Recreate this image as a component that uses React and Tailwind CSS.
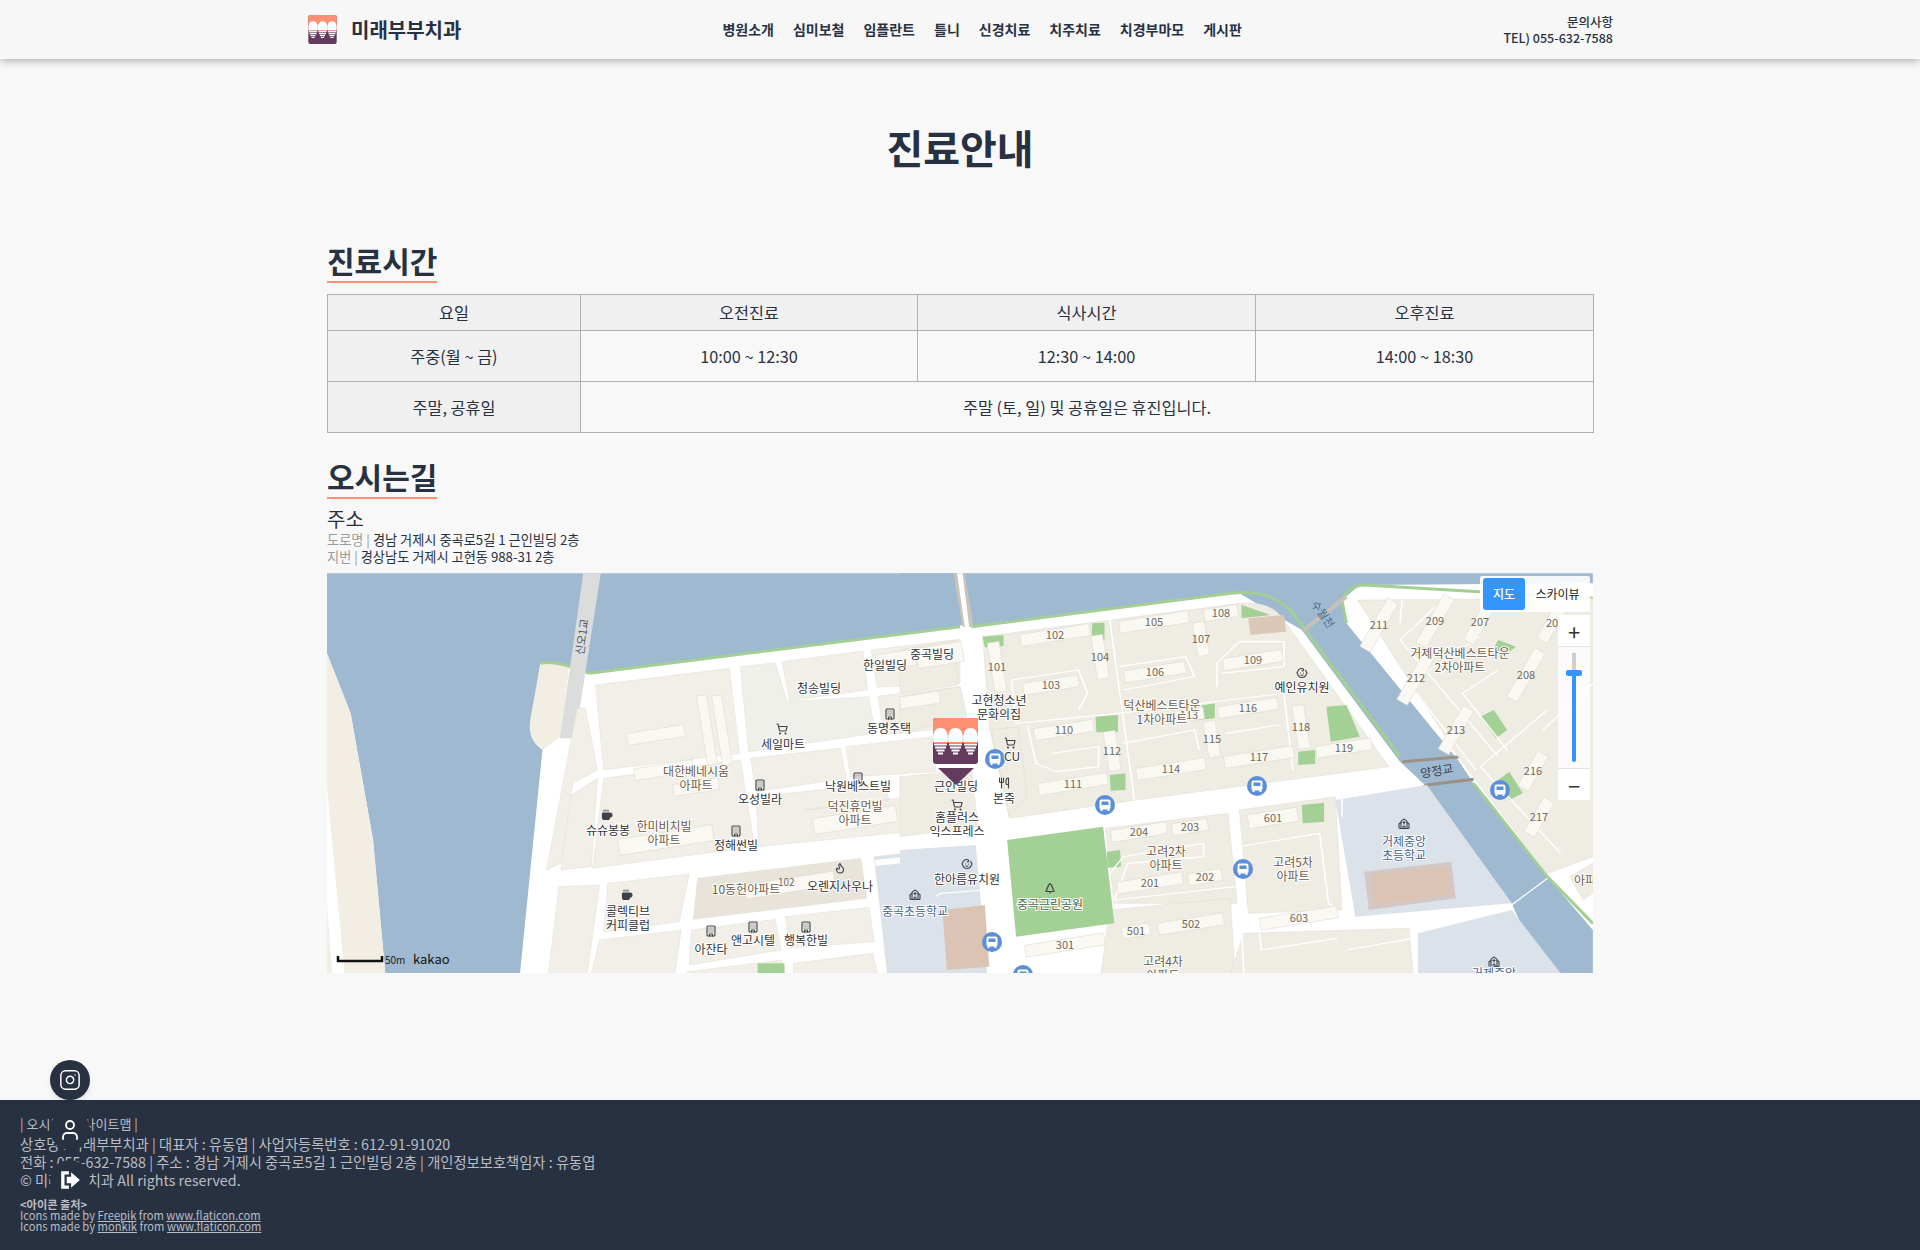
import { Instagram, User, ShoppingCart, Coffee, Building, Utensils, Flame, Baby, Church, TreePine } from 'lucide-react';

const navItems = ['병원소개', '심미보철', '임플란트', '틀니', '신경치료', '치주치료', '치경부마모', '게시판'];

function ToothMark({ className }) {
    return (
        <svg viewBox="0 0 45 46" className={className}>
            <rect width="45" height="46" rx="3" fill="#643b5f" />
            <path d="M0 3a3 3 0 0 1 3-3h39a3 3 0 0 1 3 3v22H0z" fill="#ff8f73" />
            {[7.5, 22.5, 37.5].map((x) => (
                <g key={x} fill="#fff">
                    <path d={`M${x - 7} 24c-1-6 0-14 7-14s8 8 7 14z`} />
                    <rect x={x - 6.500} y="25.500" width="13" height="2" />
                    <rect x={x - 5.500} y="28.500" width="11" height="2" />
                    <rect x={x - 4} y="31.500" width="8" height="2" />
                    <rect x={x - 2.500} y="34.500" width="5" height="2" />
                </g>
            ))}
        </svg>
    );
}

// [label, cx, cy, w, h] in page coordinates, tilted with the street grid
const buildings = [
    ['105', 1154, 622, 70, 12], ['108', 1221, 613, 34, 12], ['102', 1055, 635, 70, 12], ['107', 1201, 639, 12, 34],
    ['104', 1100, 657, 12, 44], ['101', 997, 667, 12, 50], ['103', 1051, 685, 56, 12], ['106', 1155, 672, 62, 12],
    ['109', 1253, 660, 60, 12], ['110', 1064, 730, 60, 12], ['116', 1248, 708, 60, 12], ['118', 1301, 727, 12, 44],
    ['112', 1112, 751, 12, 40], ['115', 1212, 739, 12, 36], ['119', 1344, 748, 56, 12], ['117', 1259, 757, 70, 12],
    ['114', 1171, 769, 70, 12], ['111', 1073, 784, 70, 12], ['113', 1189, 715, 30, 12],
    ['601', 1273, 818, 50, 14], ['204', 1139, 832, 56, 12], ['203', 1190, 827, 36, 12], ['202', 1205, 877, 34, 12],
    ['201', 1150, 883, 66, 12], ['603', 1299, 918, 78, 12], ['502', 1191, 924, 66, 12], ['501', 1136, 931, 28, 12],
    ['301', 1065, 945, 80, 12],
    ['', 656, 735, 58, 12], ['', 664, 770, 60, 12], ['', 707, 730, 10, 70], ['', 722, 730, 10, 70],
    ['', 696, 787, 46, 12], ['', 855, 820, 84, 16], ['', 666, 840, 95, 16], ['', 790, 885, 90, 14],
    ['', 896, 660, 40, 16], ['', 940, 655, 46, 20], ['', 920, 700, 40, 12],
];

const eastBuildings = [
    ['211', 1379, 625, 12, 56], ['209', 1435, 621, 12, 56], ['207', 1480, 622, 12, 46], ['20', 1552, 623, 12, 40],
    ['212', 1416, 678, 12, 56], ['208', 1526, 675, 12, 56], ['213', 1456, 730, 12, 50], ['216', 1533, 771, 12, 40],
    ['217', 1539, 817, 12, 40],
];

// [text lines, cx, first baseline y, colour]
const mapLabels = [
    [['중곡빌딩'], 932, 659], [['한일빌딩'], 885, 670], [['청송빌딩'], 819, 693], [['동명주택'], 889, 733],
    [['세일마트'], 783, 749], [['대한베네시움', '아파트'], 696, 776, '#6b5a48'], [['오성빌라'], 760, 804],
    [['낙원베스트빌'], 858, 791], [['덕진휴먼빌', '아파트'], 855, 811, '#6b5a48'], [['슈슈봉봉'], 608, 835],
    [['한미비치빌', '아파트'], 664, 831, '#6b5a48'], [['정해썬빌'], 736, 850], [['10동헌아파트'], 746, 894, '#6b5a48'],
    [['오렌지사우나'], 840, 891], [['콜렉티브', '커피클럽'], 628, 916], [['앤고시텔'], 753, 945],
    [['행복한빌'], 806, 945], [['아잔타'], 711, 954], [['중곡초등학교'], 915, 916, '#45618a'],
    [['고현청소년', '문화의집'], 999, 705], [['CU'], 1012, 761], [['근인빌딩'], 956, 791], [['본죽'], 1004, 803],
    [['홈플러스', '익스프레스'], 957, 822], [['덕산베스트타운', '1차아파트'], 1162, 710, '#6b5a48'],
    [['예인유치원'], 1302, 692], [['거제덕산베스트타운', '2차아파트'], 1460, 658, '#6b5a48'], [['한아름유치원'], 967, 884],
    [['중곡근린공원'], 1050, 909, '#45674a'], [['고려2차', '아파트'], 1166, 856, '#6b5a48'],
    [['고려5차', '아파트'], 1293, 867, '#6b5a48'], [['거제중앙', '초등학교'], 1404, 846, '#45618a'],
    [['고려4차', '아파트'], 1163, 966, '#6b5a48'], [['거제중앙'], 1494, 978, '#45618a'], [['아파'], 1585, 885, '#6b5a48'],
];

const mapIcons = [
    [ShoppingCart, 776, 723], [Building, 884, 708], [Building, 754, 779], [Building, 852, 772], [Coffee, 601, 809],
    [Building, 730, 825], [Flame, 834, 862], [Coffee, 621, 889], [Building, 705, 925], [Building, 747, 921],
    [Building, 800, 921], [Church, 909, 889], [ShoppingCart, 1004, 737], [Utensils, 998, 777], [ShoppingCart, 951, 799],
    [Baby, 1296, 667], [Baby, 961, 858], [TreePine, 1044, 882], [Church, 1398, 818], [Church, 1488, 956],
];

const busStops = [[995, 759], [1105, 805], [1257, 786], [1500, 790], [1243, 869], [992, 942], [1023, 975]];

function KakaoMap() {
    return (
        <svg viewBox="327 573 1266 400" className="block w-full h-full">
            <rect x="327" y="573" width="1266" height="400" fill="#fff" />

            {/* west half, points read off the map at 2.45 x 3 */}
            <g transform="translate(320 570) scale(0.40816 0.33333)">
                <path d="M17 10H1568V170L660 310 610 290 540 280 515 480 545 540 490 1210H160L130 810 75 430 17 250Z" fill="#9fb9d1" />
                <path d="M17 250 75 430 130 810 160 1210H17Z" fill="#f2eee3" />
                <path d="M17 650 60 1210H30L17 1000Z" fill="#fff" />
                <path d="M540 280C570 270 590 285 610 290L590 500 545 540C520 520 510 490 515 450Z" fill="#f2eee3" />
                <path d="M660 310 1568 170" stroke="#a4cf94" strokeWidth="3" vectorEffect="non-scaling-stroke" fill="none" />
                <path d="M660 310C620 290 570 270 540 280" stroke="#a4cf94" strokeWidth="3" vectorEffect="non-scaling-stroke" fill="none" />
                <path d="M645 10H688L625 505H588Z" fill="#dcdcdc" />
                <g fill="#f2efe8" stroke="#d9d5ca" strokeWidth="1" vectorEffect="non-scaling-stroke">
                    <path d="M675 345 1003 295 1028 550 695 600Z" />
                    <path d="M1030 290 1115 278 1145 395 1345 380 1360 490 1050 545Z" fill="#eff0ea" />
                    <path d="M1132 275 1330 243 1342 360 1150 392Z" />
                    <path d="M1350 240 1568 208V340L1365 352Z" />
                    <path d="M1368 378 1568 350V470L1380 495Z" />
                    <path d="M695 625 1030 570 1065 830 668 895Z" />
                    <path d="M1055 565 1275 535 1290 625 1068 665Z" />
                    <path d="M1288 530 1500 500 1510 605 1300 620Z" />
                    <path d="M1068 680 1380 640 1395 690 1190 720 1568 660V770L1075 830Z" />
                    <path d="M610 680 680 625 665 890 590 900Z" />
                    <path d="M630 415 650 415 680 600 620 640 590 880 555 900Z" />
                    <path d="M705 940 905 912 880 1055 695 1085Z" />
                    <path d="M925 925 1325 865 1340 985 915 1048Z" fill="#e8e4da" />
                    <path d="M585 950 685 945 655 1210H560Z" />
                    <path d="M685 1110 885 1080 870 1210H665Z" />
                    <path d="M910 1080 1115 1048 1130 1140 905 1185Z" />
                    <path d="M1140 1040 1345 1012 1358 1115 1150 1135Z" />
                    <path d="M900 1205 1130 1170 1140 1210H900Z" />
                    <path d="M1160 1180 1355 1150 1365 1210H1160Z" />
                    <path d="M1358 860 1568 830V1210H1390Z" fill="#dce2ea" />
                </g>
                <path d="M1072 1180H1138V1210H1072Z" fill="#a3d095" />
                <path d="M1525 1020H1568V1210H1540Z" fill="#dbc4b3" />
                <path d="M1360 870 1530 848V865L1362 888Z" fill="#fff" />
            </g>

            {/* east half, points read off the map at 2.24 x 3 */}
            <g transform="translate(900 570) scale(0.44643 0.33333)">
                <path d="M0 10H1552V40L1030 45 990 90 1000 160 1250 570 1285 640 1450 920 1552 1080V1210H1440L1370 1000 1180 650 1120 575 900 180 760 70 160 170 130 165 0 190Z" fill="#9fb9d1" />
                <path d="M1450 920 1552 1060" stroke="#a4cf94" strokeWidth="3" vectorEffect="non-scaling-stroke" fill="none" />
                <path d="M1000 160 990 90C1000 60 1020 45 1040 45L1552 85" stroke="#a4cf94" strokeWidth="3" vectorEffect="non-scaling-stroke" fill="none" />
                <path d="M160 170 740 70C800 60 850 80 880 130L1120 560" stroke="#a4cf94" strokeWidth="3" vectorEffect="non-scaling-stroke" fill="none" />
                <path d="M1285 640 1450 920" stroke="#a4cf94" strokeWidth="3" vectorEffect="non-scaling-stroke" fill="none" />
                <path d="M120 10H145L165 170H140Z" fill="#c9c3b8" />
                <path d="M128 10H140L155 170H145Z" fill="#fff" />
                <path d="M905 180 1000 80" stroke="#c8c2b6" strokeWidth="4" vectorEffect="non-scaling-stroke" />
                <path d="M1125 575 1255 560M1155 665 1180 645 1285 628" stroke="#9b9185" strokeWidth="3" vectorEffect="non-scaling-stroke" fill="none" />
                <g fill="#efece3" stroke="#d9d5ca" strokeWidth="1" vectorEffect="non-scaling-stroke">
                    <path d="M185 200 760 100C810 95 840 110 860 150L1095 590 530 690 245 745 200 470Z" />
                    <path d="M1025 90 1552 85V860L1450 910 1255 570Z" />
                    <path d="M460 775 735 730 755 1000 480 1000Z" />
                    <path d="M760 720 975 680 990 1020 780 1030Z" />
                    <path d="M470 1020 740 985 750 1210H450Z" />
                    <path d="M770 1090 1140 1075 1150 1210H740Z" />
                    <path d="M1500 920 1552 880V970L1530 990Z" />
                    <path d="M0 240 125 210 130 345 0 370Z" />
                    <path d="M0 380 135 350 150 440 0 490Z" />
                    <path d="M205 480 265 470 285 680 245 740Z" />
                    <path d="M0 620 160 600 175 770 0 800Z" />
                </g>
                <g fill="#dce2ea">
                    <path d="M975 690 1180 645 1370 1000 1020 1040Z" />
                    <path d="M0 840 170 825 195 1210H0Z" />
                    <path d="M1160 1090 1370 1020 1480 1210H1160Z" />
                </g>
                <path d="M1040 905 1235 875 1245 985 1050 1020Z" fill="#d4c7c4" />
                <path d="M1055 915 1225 890 1232 975 1062 1003Z" fill="#dbc4b3" />
                <path d="M95 1020 190 1005 200 1190 105 1200Z" fill="#dbc4b3" />
                <g fill="#a3d095">
                    <path d="M240 810 455 770 480 1060 260 1100Z" />
                    <path d="M185 200 232 195 232 228 190 232Z" />
                    <path d="M430 160 458 158 458 210 430 212Z" />
                    <path d="M765 105 830 135 765 145Z" />
                    <path d="M438 440 488 435 488 485 440 487Z" />
                    <path d="M660 410 705 400 705 445 662 450Z" />
                    <path d="M955 410 1000 405 1030 500 965 515Z" />
                    <path d="M892 545 930 540 930 582 892 585Z" />
                    <path d="M470 615 505 610 505 660 472 662Z" />
                    <path d="M900 705 950 698 950 755 902 760Z" />
                    <path d="M463 845 493 840 495 890 465 893Z" />
                    <path d="M1300 440 1330 420 1360 480 1335 505Z" />
                    <path d="M1340 210 1380 230 1350 260 1325 245Z" />
                    <path d="M1340 630 1365 605 1395 670 1365 690Z" />
                </g>
                <path d="M780 145 860 135 865 185 785 195Z" fill="#dcc8b8" />
                {/* walkways inside the apartment blocks */}
                <g stroke="#fff" strokeWidth="3.500" vectorEffect="non-scaling-stroke" fill="none">
                    <path d="M470 150 525 690" />
                    <path d="M250 330 400 300 420 370 400 420" />
                    <path d="M250 330 260 460 490 430 860 370 880 600" />
                    <path d="M285 465 305 580 350 605 445 590 445 530 340 550" />
                    <path d="M500 520 660 480 670 540" />
                    <path d="M710 350 710 280 760 215 860 215 860 290 720 310" />
                    <path d="M490 290 640 260 660 320 500 360" />
                    <path d="M730 490 850 465" />
                    <path d="M755 740 770 1210" />
                    <path d="M470 910 500 860 680 820 680 860 510 880 480 990 750 950" />
                    <path d="M760 830 940 790 960 1000 980 1020 800 1040 810 1140 980 1105" />
                    <path d="M1125 90 1120 160M1200 110 1120 210 1340 560M1300 200 1140 340 1290 600" />
                    <path d="M1340 300 1260 370 1360 540M1450 420 1300 590 1480 850M1552 340 1440 480" />
                    <path d="M1010 1060 1120 1040 1150 1075" />
                    <path d="M1150 1075 1370 1005 1450 925" />
                    <path d="M990 680 990 740M1000 1140 1150 1105" />
                    <path d="M80 980 90 970 190 960" />
                </g>
            </g>

            {[...buildings, ...eastBuildings].map(([num, cx, cy, w, h], i) => (
                <g key={i} transform={`rotate(${i >= buildings.length ? 30 : -9} ${cx} ${cy})`}>
                    <rect x={cx - w / 2} y={cy - h / 2} width={w} height={h} fill="#faf8f3" stroke="#dcd8cd" strokeWidth="0.500" />
                </g>
            ))}
            {[...buildings, ...eastBuildings].map(([num, cx, cy]) => num && (
                <text key={`${num}${cx}`} x={cx} y={cy + 4} textAnchor="middle" fontSize="11" fill="#6f6a60">{num}</text>
            ))}

            {mapIcons.map(([Icon, x, y], i) => (
                <Icon key={i} x={x} y={y} size={12} color="#3d4248" fill={Icon === Coffee ? '#3d4248' : 'none'} strokeWidth={2.200} />
            ))}

            {busStops.map(([x, y]) => (
                <g key={`${x}-${y}`}>
                    <circle cx={x} cy={y} r="10" fill="#5b8fd9" />
                    <rect x={x - 5.500} y={y - 5.500} width="11" height="10" rx="2" fill="#fff" />
                    <rect x={x - 3.500} y={y - 3.500} width="7" height="3.500" fill="#5b8fd9" />
                    <rect x={x - 4.500} y={y + 4} width="2" height="2" fill="#fff" />
                    <rect x={x + 2.500} y={y + 4} width="2" height="2" fill="#fff" />
                </g>
            ))}

            {mapLabels.map(([lines, x, y, color]) =>
                lines.map((line, i) => (
                    <text key={`${line}${x}`} x={x} y={y + i * 13.500} textAnchor="middle" fontSize="12" fill={color || '#2f3236'} stroke="#fff" strokeWidth="2" paintOrder="stroke">
                        {line}
                    </text>
                ))
            )}
            <text x="583" y="637" transform="rotate(-82 583 637)" textAnchor="middle" dominantBaseline="middle" fontSize="11" fill="#4b5563">신오1교</text>
            <text x="1322" y="615" transform="rotate(55 1322 615)" textAnchor="middle" dominantBaseline="middle" fontSize="11" fill="#4a6a8c">수월천</text>
            <text x="1437" y="772" transform="rotate(-10 1437 772)" textAnchor="middle" dominantBaseline="middle" fontSize="12" fill="#3a3f45">양정교</text>
            <text x="778" y="886" fontSize="10" fill="#6f6a60">102</text>

            {/* scale bar */}
            <path d="M338 956V961H382V956" stroke="#111" strokeWidth="2.500" fill="none" />
            <text x="385" y="964" fontSize="10" fill="#222">50m</text>
            <text x="413" y="964" fontSize="13" fill="#111">kakao</text>
        </svg>
    );
}

function MapControls() {
    return (
        <>
            <div className="absolute left-[1153px] top-[3px] w-[110px] h-[36px] bg-white/90 rounded-[2px] flex items-center pl-[3px]">
                <span className="w-[42px] h-[32px] bg-[#3396ff] text-white rounded-[3px] text-[12px] font-medium flex items-center justify-center">지도</span>
                <span className="flex-1 text-center text-[12px] text-[#222]">스카이뷰</span>
            </div>
            <div className="absolute left-[1231px] top-[42px] w-[32px] h-[185px] bg-white/80 rounded-[2px] flex flex-col items-center">
                <div className="h-[32px] w-full bg-white flex items-center justify-center text-[22px] leading-none text-[#333] border-b border-[#e5e5e5]">+</div>
                <div className="relative flex-1 w-[4px] my-[6px] rounded-full bg-[#3396ff]">
                    <div className="h-[19px] bg-[#cfcfcf] rounded-t-full" />
                    <div className="absolute left-[-6px] top-[17px] w-[16px] h-[6px] rounded-[2px] bg-[#3396ff]" />
                </div>
                <div className="h-[32px] w-full bg-white flex items-center justify-center text-[22px] leading-none text-[#333] border-t border-[#e5e5e5]">−</div>
            </div>
        </>
    );
}

function SectionTitle({ children, className = '' }) {
    return (
        <h2 className={`w-fit text-[30px] leading-[41px] font-bold text-[#283142] border-b-2 border-[#ff8f73] ${className}`}>
            {children}
        </h2>
    );
}

export default function App() {
    return (
        <div className="bg-[#f8f8f8] text-[#283142] font-['Noto_Sans_CJK_KR','Noto_Sans',sans-serif]">
            <header className="h-[59px] bg-[#f7f7f7] shadow-[0_2px_8px_rgba(0,0,0,0.3)] relative">
                <div className="w-[1306px] mx-auto h-full flex items-center">
                    <ToothMark className="w-[31px] h-[29px]" />
                    <span className="ml-[13px] text-[20px] font-bold">미래부부치과</span>
                    <nav className="ml-[261px] flex gap-[19px] text-[14px] font-semibold">
                        {navItems.map((item) => (
                            <a key={item}>{item}</a>
                        ))}
                    </nav>
                    <div className="ml-auto text-right text-[12.5px] leading-[16px] font-medium">
                        <div>문의사항</div>
                        <div>TEL) 055-632-7588</div>
                    </div>
                </div>
            </header>

            <main className="w-[1266px] mx-auto h-[1041px] pt-[59px]">
                <h1 className="text-center text-[40px] leading-[58px] font-bold">진료안내</h1>

                <SectionTitle className="mt-[64px]">진료시간</SectionTitle>
                <table className="mt-[11px] w-full table-fixed border-collapse text-[16.3px] text-center border border-[#b0b0b0]">
                    <colgroup>
                        <col className="w-[253px]" />
                        <col className="w-[337px]" />
                        <col className="w-[338px]" />
                        <col className="w-[338px]" />
                    </colgroup>
                    <thead>
                        <tr className="h-[36px] bg-[#f0f0f0]">
                            {['요일', '오전진료', '식사시간', '오후진료'].map((h) => (
                                <th key={h} className="font-normal border border-[#b0b0b0]">{h}</th>
                            ))}
                        </tr>
                    </thead>
                    <tbody>
                        <tr className="h-[51px]">
                            <td className="bg-[#f0f0f0] border border-[#b0b0b0]">주중(월 ~ 금)</td>
                            <td className="border border-[#b0b0b0]">10:00 ~ 12:30</td>
                            <td className="border border-[#b0b0b0]">12:30 ~ 14:00</td>
                            <td className="border border-[#b0b0b0]">14:00 ~ 18:30</td>
                        </tr>
                        <tr className="h-[51px]">
                            <td className="bg-[#f0f0f0] border border-[#b0b0b0]">주말, 공휴일</td>
                            <td colSpan={3} className="border border-[#b0b0b0]">주말 (토, 일) 및 공휴일은 휴진입니다.</td>
                        </tr>
                    </tbody>
                </table>

                <SectionTitle className="mt-[23px]">오시는길</SectionTitle>
                <h3 className="mt-[8px] text-[20px] leading-[24px]">주소</h3>
                <p className="text-[13.2px] leading-[17px]"><span className="text-[#9a9a9a]">도로명 | </span>경남 거제시 중곡로5길 1 근인빌딩 2층</p>
                <p className="text-[13.2px] leading-[17px]"><span className="text-[#9a9a9a]">지번 | </span>경상남도 거제시 고현동 988-31 2층</p>
                <div className="relative mt-[8px] h-[400px] overflow-hidden">
                    <KakaoMap />
                    <div className="absolute left-[606px] top-[145px]">
                        <ToothMark className="w-[45px] h-[46px]" />
                        <div className="mx-auto mt-[4px] w-0 h-0 border-x-[18px] border-x-transparent border-t-[17px] border-t-[#643b5f]" />
                    </div>
                    <MapControls />
                </div>
            </main>

            <footer className="h-[150px] bg-[#283142] text-[#b9bdc4] px-[20px] pt-[14px]">
                <p className="text-[13px] leading-[20px]">| 오시는길 | 사이트맵 |</p>
                <p className="text-[14.3px] leading-[18px] mt-[1px]">상호명 : 미래부부치과 | 대표자 : 유동엽 | 사업자등록번호 : 612-91-91020</p>
                <p className="text-[14.3px] leading-[18px]">전화 : 055-632-7588 | 주소 : 경남 거제시 중곡로5길 1 근인빌딩 2층 | 개인정보보호책임자 : 유동엽</p>
                <p className="text-[14.3px] leading-[18px]">© 미래부부치과 All rights reserved.</p>
                <div className="mt-[10px] text-[11.2px] leading-[11px]">
                    <p className="font-bold">&lt;아이콘 출처&gt;</p>
                    <p>Icons made by <a className="underline">Freepik</a> from <a className="underline">www.flaticon.com</a></p>
                    <p>Icons made by <a className="underline">monkik</a> from <a className="underline">www.flaticon.com</a></p>
                </div>
            </footer>

            <div className="fixed left-[50px] top-[1060px] w-[40px] h-[40px] rounded-full bg-[#283142] text-white flex items-center justify-center shadow-md">
                <Instagram size={22} strokeWidth={1.6} />
            </div>
            <div className="fixed left-[50px] top-[1110px] w-[40px] h-[40px] rounded-full bg-[#283142] text-white flex items-center justify-center">
                <User size={24} strokeWidth={1.8} />
            </div>
            <div className="fixed left-[50px] top-[1160px] w-[40px] h-[40px] rounded-full bg-[#283142] text-white flex items-center justify-center">
                <svg viewBox="0 0 20 20" className="w-[22px] h-[22px]" fill="#fff">
                    <path d="M2 2h7v3H5v10h4v3H2z" />
                    <path d="M11 3l8 7-8 7v-4H7V7h4z" />
                </svg>
            </div>
        </div>
    );
}
